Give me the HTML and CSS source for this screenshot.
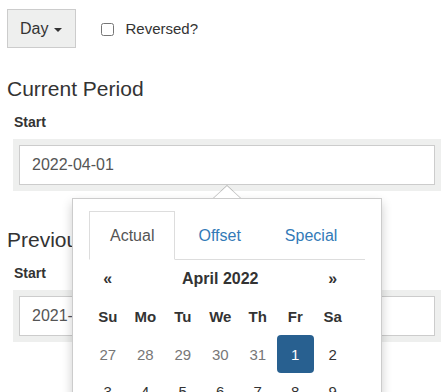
FILE: index.html
```html
<!DOCTYPE html>
<html lang="en">
<head>
  <meta charset="UTF-8" />
  <title>Period picker</title>
  <link rel="stylesheet" href="styles.css">
</head>
<body>

<div class="toolbar">
  <button class="btn-day">Day <span class="caret"></span></button>
  <label class="check"><input type="checkbox" /> Reversed?</label>
</div>

<section class="period first">
  <h3>Current Period</h3>
  <label class="field-label">Start</label>
  <div class="input-well"><input type="text" value="2022-04-01" readonly /></div>
</section>

<section class="period">
  <h3>Previous Period</h3>
  <label class="field-label">Start</label>
  <div class="input-well"><input type="text" value="2021-04-01" readonly /></div>
</section>

<div class="popover">
  <div class="arrow"></div>
  <ul class="tabs">
    <li class="active"><a>Actual</a></li>
    <li><a>Offset</a></li>
    <li><a>Special</a></li>
  </ul>
  <table class="cal">
    <colgroup>
      <col><col><col><col><col><col><col>
    </colgroup>
    <thead>
      <tr class="nav-row"><th>«</th><th colspan="5">April 2022</th><th>»</th></tr>
      <tr class="dow"><th>Su</th><th>Mo</th><th>Tu</th><th>We</th><th>Th</th><th>Fr</th><th>Sa</th></tr>
    </thead>
    <tbody>
      <tr>
        <td class="old">27</td><td class="old">28</td><td class="old">29</td><td class="old">30</td><td class="old">31</td>
        <td><span class="selected">1</span></td><td>2</td>
      </tr>
      <tr><td>3</td><td>4</td><td>5</td><td>6</td><td>7</td><td>8</td><td>9</td></tr>
    </tbody>
  </table>
</div>

</body>
</html>
```

FILE: styles.css
```css
* { box-sizing: border-box; }

html { overflow: hidden; }

body {
  margin: 0;
  height: 392px;
  overflow: hidden;
  background: #fff;
  color: #333;
  font-family: "Liberation Sans", Arial, sans-serif;
  position: relative;
}

.toolbar {
  display: flex;
  align-items: center;
  padding: 9px 7px 0;
}

.btn-day {
  display: inline-flex;
  align-items: center;
  gap: 6px;
  height: 39px;
  padding: 0 13px 0 12px;
  background: #eeefee;
  border: 1px solid #cccccc;
  border-radius: 0;
  font-family: inherit;
  font-size: 16px;
  color: #333;
}

.caret {
  width: 0;
  height: 0;
  border-top: 4px solid #333;
  border-left: 4px solid transparent;
  border-right: 4px solid transparent;
  margin-top: 2px;
}

.check {
  display: flex;
  align-items: center;
  margin-left: 25px;
  font-size: 15px;
  color: #333;
}

.check input {
  width: 13px;
  height: 13px;
  margin: 1px 11px 0 0;
}

.period { padding: 0 0 0 7px; }

.period h3 {
  margin: 37px 0 0;
  font-size: 21px;
  font-weight: normal;
  line-height: 24px;
  color: #333;
}

.period.first h3 { margin-top: 29px; }

.field-label {
  display: block;
  margin: 11px 0 0 7px;
  font-size: 14px;
  font-weight: bold;
  line-height: 20px;
}

.input-well {
  margin: 7px 1px 0 6px;
  padding: 6px;
  background: #eeefee;
}

.input-well input {
  display: block;
  width: 100%;
  height: 40px;
  padding: 0 12px;
  border: 1px solid #cccccc;
  background: #fff;
  font-family: inherit;
  font-size: 16px;
  color: #555;
}

.popover {
  position: absolute;
  left: 72px;
  top: 198px;
  width: 310px;
  height: 260px;
  padding: 12px 16px 0;
  background: #fff;
  border: 1px solid rgba(0, 0, 0, 0.2);
  box-shadow: 0 5px 10px rgba(0, 0, 0, 0.2);
}

.arrow {
  position: absolute;
  left: 140px;
  top: -14px;
  width: 0;
  height: 0;
  border-left: 14px solid transparent;
  border-right: 14px solid transparent;
  border-bottom: 13px solid rgba(0, 0, 0, 0.25);
}

.arrow::after {
  content: "";
  position: absolute;
  left: -13px;
  top: 1px;
  border-left: 13px solid transparent;
  border-right: 13px solid transparent;
  border-bottom: 12px solid #fff;
}

.tabs {
  display: flex;
  margin: 0;
  padding: 0;
  list-style: none;
  border-bottom: 1px solid #dddddd;
}

.tabs li {
  margin: 0 2px -1px 0;
}

.tabs a {
  display: block;
  padding: 13px 20px;
  line-height: 21px;
  font-size: 16px;
  color: #337ab7;
  border: 1px solid transparent;
}

.tabs li.active a {
  color: #555;
  background: #fff;
  border-color: #dddddd;
  border-bottom-color: transparent;
}

.cal {
  border-collapse: collapse;
  table-layout: fixed;
  width: 262.5px;
}

.cal col { width: 37.5px; }

.cal th,
.cal td {
  height: 37.5px;
  padding: 0;
  text-align: center;
  font-size: 15px;
}

.cal th {
  font-weight: bold;
  color: #333;
}

.nav-row th { font-size: 16px; }

.cal td { color: #333; }

.cal td.old { color: #777; }

.selected {
  display: flex;
  align-items: center;
  justify-content: center;
  width: 37px;
  height: 38px;
  margin: 0 auto;
  border-radius: 4px;
  background: #286090;
  color: #fff;
}
```
